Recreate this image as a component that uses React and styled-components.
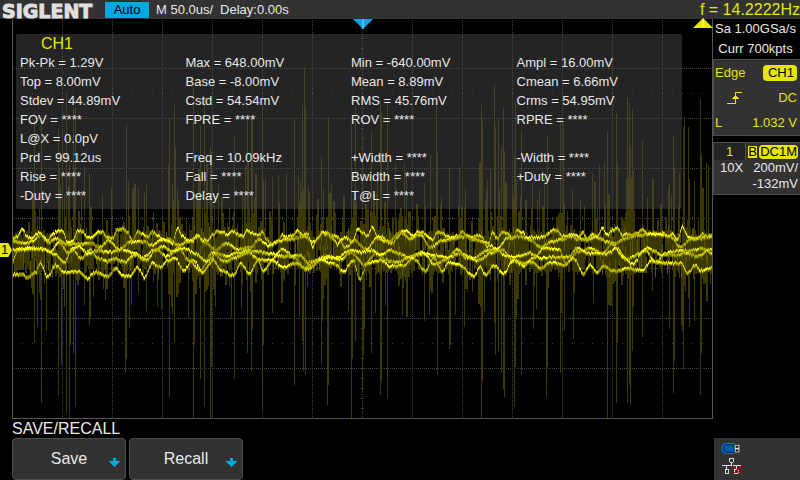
import React from "react";
import styled, { createGlobalStyle } from "styled-components";

const measures = [
  ["Pk-Pk = 1.29V", "Max = 648.00mV", "Min = -640.00mV", "Ampl = 16.00mV"],
  ["Top = 8.00mV", "Base = -8.00mV", "Mean = 8.89mV", "Cmean = 6.66mV"],
  ["Stdev = 44.89mV", "Cstd = 54.54mV", "RMS = 45.76mV", "Crms = 54.95mV"],
  ["FOV = ****", "FPRE = ****", "ROV = ****", "RPRE = ****"],
  ["L@X = 0.0pV", "", "", ""],
  ["Prd = 99.12us", "Freq = 10.09kHz", "+Width = ****", "-Width = ****"],
  ["Rise = ****", "Fall = ****", "Bwidth = ****", "+Duty = ****"],
  ["-Duty = ****", "Delay = ****", "T@L = ****", ""],
];

// x, y pairs: how far the noise peaks reach above the trace
const peaksUp = [
  34, 113, 41, 117, 58, 129, 59, 168, 62, 133, 66, 93, 69, 157, 73, 109, 75, 108, 84, 167, 89, 173, 111, 187,
  126, 125, 128, 181, 138, 187, 144, 193, 146, 185, 169, 119, 174, 105, 175, 147, 193, 87, 194, 193, 200, 125,
  204, 97, 210, 147, 211, 152, 218, 185, 234, 135, 245, 165, 247, 118, 251, 119, 252, 115, 262, 105, 263, 181,
  265, 179, 272, 177, 278, 175, 286, 173, 294, 117, 298, 175, 302, 105, 304, 67, 305, 107, 308, 187, 321, 157,
  328, 117, 331, 183, 351, 125, 355, 105, 362, 136, 371, 131, 380, 101, 381, 113, 387, 101, 395, 163, 406, 173,
  424, 183, 430, 155, 436, 97, 437, 153, 449, 167, 459, 167, 465, 189, 481, 105, 482, 121, 486, 189, 490, 167,
  494, 85, 495, 127, 498, 117, 501, 147, 503, 107, 504, 151, 514, 155, 515, 101, 521, 131, 532, 183, 539, 189,
  544, 177, 547, 135, 560, 120, 563, 123, 572, 189, 592, 173, 599, 165, 604, 163, 607, 131, 616, 113, 617, 163,
  627, 97, 629, 103, 630, 147, 632, 109, 633, 171, 642, 141, 652, 179, 653, 179, 669, 183, 673, 135, 674, 167,
  679, 173, 683, 127, 684, 117, 688, 127, 689, 179, 694, 181, 700, 99, 701, 155, 706, 163, 708, 165,
];

const peaksDown = [
  34, 343, 37, 327, 41, 403, 46, 331, 58, 395, 61, 365, 66, 413, 69, 418, 70, 345, 73, 353, 75, 407, 84, 305,
  89, 325, 90, 317, 125, 373, 126, 359, 129, 327, 138, 293, 146, 311, 157, 307, 161, 309, 169, 397, 171, 307,
  174, 343, 188, 319, 193, 418, 194, 345, 200, 379, 204, 407, 210, 418, 211, 367, 231, 318, 234, 379, 241, 309,
  247, 353, 251, 371, 252, 329, 262, 413, 263, 345, 272, 313, 294, 385, 299, 317, 302, 341, 303, 371, 305, 375,
  321, 365, 322, 321, 327, 405, 328, 385, 348, 311, 351, 418, 352, 359, 355, 341, 362, 393, 363, 355, 364, 329,
  371, 353, 375, 313, 380, 395, 381, 381, 387, 399, 402, 315, 406, 317, 407, 317, 424, 321, 429, 315, 437, 375,
  449, 349, 450, 345, 455, 315, 464, 327, 481, 418, 482, 381, 484, 313, 494, 323, 495, 355, 498, 351, 501, 373,
  503, 389, 504, 397, 514, 407, 515, 367, 516, 317, 521, 375, 533, 329, 536, 309, 546, 397, 547, 367, 560, 373,
  561, 313, 564, 331, 573, 339, 593, 303, 607, 418, 608, 303, 616, 403, 617, 343, 627, 403, 629, 385, 630, 405,
  632, 351, 633, 307, 642, 337, 652, 291, 669, 329, 673, 393, 674, 361, 681, 325, 682, 331, 683, 369, 689, 327,
  694, 321, 700, 395, 701, 353, 706, 301,
];

const topTrace = [
  238, 236, 229, 237, 238, 233, 235, 241, 234, 231, 231, 242, 241, 231, 231, 238, 237, 232, 232, 237, 238, 230,
  228, 232, 241, 232, 233, 237, 232, 235, 239, 240, 243, 228, 236, 240, 241, 235, 240, 240, 235, 231, 232, 235,
  231, 234, 236, 230, 233, 235, 232, 240, 244, 241, 235, 237, 235, 231, 235, 233, 246, 238, 232, 233, 238, 244,
  238, 238, 241, 229, 232, 236, 227, 237, 237, 242, 243, 236, 231, 231, 236, 232, 232, 236, 240, 232, 233, 237,
  238, 236, 231, 236, 237, 235, 238, 247, 232, 238, 232, 233, 238, 230, 232, 238, 237, 237, 237, 234, 230, 230,
  236, 236, 236, 239, 232, 238, 234, 236, 228, 235, 230, 228, 235, 234, 235, 233, 230, 234, 233, 234, 233, 236,
  234, 239, 226, 236, 238, 238, 234, 237, 236,
].flatMap((y, i) => [12 + i * 5, y]);

const upperTrace = [
  12, 240, 24, 243, 32, 241, 40, 235, 48, 242, 56, 238, 65, 243, 76, 244, 90, 243, 100, 247, 108, 240, 118, 249,
  130, 242, 142, 241, 152, 245, 160, 240, 168, 239, 178, 245, 188, 241, 198, 236, 206, 243, 215, 250, 226, 243,
  238, 249, 250, 247, 258, 239, 268, 245, 280, 240, 294, 238, 304, 236, 313, 242, 322, 233, 336, 236, 345, 247,
  354, 240, 366, 249, 376, 238, 388, 241, 400, 232, 410, 238, 420, 234, 430, 247, 442, 240, 452, 238, 464, 236,
  474, 239, 485, 242, 496, 249, 508, 237, 520, 236, 530, 239, 540, 247, 552, 241, 562, 239, 572, 234, 584, 240,
  596, 237, 606, 241, 614, 243, 624, 238, 636, 235, 648, 234, 660, 234, 670, 236, 680, 247, 690, 239, 700, 238, 711, 236,
];

const midTrace = [
  12, 250, 20, 249, 38, 248, 50, 251, 58, 242, 68, 252, 78, 246, 88, 254, 97, 250, 110, 252, 120, 249, 132, 252,
  142, 257, 154, 250, 162, 246, 172, 251, 184, 248, 196, 254, 206, 261, 216, 253, 226, 256, 238, 252, 250, 250,
  260, 252, 270, 253, 283, 256, 300, 255, 307, 262, 323, 258, 337, 257, 350, 250, 363, 252, 370, 250, 380, 255,
  390, 250, 400, 254, 410, 257, 420, 253, 433, 255, 447, 257, 460, 253, 473, 258, 487, 250, 497, 248, 503, 255,
  513, 257, 530, 253, 540, 258, 553, 257, 567, 257, 577, 248, 587, 253, 607, 253, 617, 248, 625, 259, 640, 253,
  647, 248, 653, 250, 662, 255, 670, 252, 680, 250, 693, 250, 703, 248, 711, 253,
];

const lowMidTrace = [
  12, 260, 18, 249, 30, 248, 44, 249, 54, 254, 64, 262, 72, 248, 80, 258, 90, 250, 98, 258, 106, 261, 114, 258,
  124, 262, 134, 254, 146, 260, 156, 249, 166, 256, 178, 248, 188, 260, 200, 270, 212, 252, 224, 261, 236, 257,
  248, 252, 258, 259, 270, 260, 282, 249, 294, 257, 304, 268, 316, 260, 326, 256, 340, 259, 350, 252, 364, 264,
  376, 252, 386, 260, 398, 262, 408, 257, 422, 252, 434, 264, 446, 259, 456, 249, 466, 257, 478, 260, 490, 253,
  502, 249, 512, 260, 524, 263, 534, 257, 544, 248, 558, 249, 566, 263, 578, 251, 590, 248, 602, 253, 612, 243,
  622, 256, 632, 264, 644, 250, 656, 262, 664, 253, 676, 255, 686, 252, 696, 256, 711, 249,
];

const lowTrace = [
  12, 274, 20, 274, 28, 277, 35, 272, 40, 263, 47, 277, 55, 265, 63, 272, 78, 271, 87, 278, 95, 272, 107, 276,
  115, 268, 123, 276, 130, 275, 137, 267, 144, 277, 152, 263, 160, 267, 167, 260, 175, 258, 183, 270, 193, 260,
  202, 272, 213, 260, 220, 270, 233, 275, 240, 263, 249, 273, 257, 260, 263, 271, 272, 260, 283, 267, 295, 263,
  307, 269, 320, 260, 333, 263, 343, 271, 353, 260, 359, 279, 367, 263, 380, 260, 390, 266, 403, 265, 413, 258,
  425, 271, 433, 257, 442, 271, 448, 262, 460, 265, 473, 276, 480, 267, 485, 275, 493, 265, 503, 273, 513, 260,
  523, 265, 530, 261, 540, 268, 550, 262, 563, 265, 573, 258, 583, 273, 590, 265, 597, 272, 603, 265, 613, 271,
  627, 268, 642, 270, 650, 261, 667, 263, 680, 263, 687, 272, 695, 265, 700, 270, 711, 268,
];

// small seeded generator, so the noise is the same on each render
const makeRandom = (seed) => () => {
  seed = (seed * 16807) % 2147483647;
  return seed / 2147483647;
};

const valueAt = (points, x) => {
  for (let i = 2; i < points.length; i += 2) {
    if (points[i] >= x) {
      const t = (x - points[i - 2]) / (points[i] - points[i - 2] || 1);
      const s = t * t * (3 - 2 * t);
      return points[i - 1] + (points[i + 1] - points[i - 1]) * s;
    }
  }
  return points[points.length - 1];
};

const bar = (x, y1, y2, w = 1) => `M${x} ${Math.round(y1)}h${w}V${Math.round(y2)}h-${w}z`;

const buildWave = () => {
  const random = makeRandom(4211);
  const levels = { noise: "", haze: "", dim: "", mid: "", bright: "", peak: "" };
  const busy = [38, 63, 71, 128, 173, 198, 209, 250, 303, 325, 353, 364, 382, 404, 436, 484, 502, 515, 561, 608, 628, 684, 706];
  for (let i = 0; i < peaksUp.length; i += 2) {
    levels.noise += bar(peaksUp[i], peaksUp[i + 1], 252);
  }
  for (let i = 0; i < peaksDown.length; i += 2) {
    levels.noise += bar(peaksDown[i], 248, peaksDown[i + 1]);
  }
  for (let x = 13; x < 711; x++) {
    const near = busy.some((b) => Math.abs(b - x) < 7);
    const chance = near ? 0.7 : 0.28;
    const width = random() < 0.5 ? 2 : 1;
    if (random() < chance) {
      levels.noise += bar(x, 232 - random() * random() * (near ? 76 : 56), 250, width);
    }
    if (random() < chance) {
      levels.noise += bar(x, 250, 266 + random() * random() * (near ? 54 : 40), width);
    }
    if (random() < 0.5) {
      levels.noise += bar(x, 231 + random() * 8, 260 + random() * 14, 2);
    }
    if (random() < (near ? 0.6 : 0.25)) {
      const y = 226 + random() * 38;
      levels.haze += bar(x, y, y + 4 + random() * 14);
    }
  }
  [topTrace, upperTrace, midTrace, lowMidTrace, lowTrace].forEach((trace, n) => {
    const faint = n === 1 || n === 3 ? 0.15 : 0;
    // glow drifts slowly along the trace, so it lights up in runs
    let glow = 0.5;
    let target = 0.5;
    for (let x = 13; x < 712; x++) {
      if (random() < 0.25) target = random();
      glow += (target - glow) * 0.4;
      const y = Math.round(valueAt(trace, x) + random() * 1.6 - 0.8);
      const slope = Math.abs(valueAt(trace, x + 1) - valueAt(trace, x - 1)) / 2;
      const r = glow + random() * 0.4 - faint - slope * 0.1;
      levels.haze += bar(x, y - 2, y + 3);
      levels.dim += bar(x, y - 1, y + 2);
      if (r > 0.2) levels.mid += bar(x, y - 1, y + 1 + (random() < 0.4 ? 1 : 0));
      if (r > 0.55) levels.bright += bar(x, y - 1, y + 1);
      if (r > 0.85) levels.peak += bar(x, y - 1, y + 1);
    }
  });
  return levels;
};

const wave = buildWave();

const range = (from, to, step) => {
  const list = [];
  for (let v = from; v < to; v += step) list.push(v);
  return list;
};

const Waveform = () => (
  <Scope viewBox="12 19 701 400" preserveAspectRatio="none" shapeRendering="crispEdges" aria-hidden="true">
    <g stroke="#444" strokeWidth="1" strokeDasharray="1 1">
      {range(62, 712, 50).map((x) => (
        <path key={x} d={`M${x}.5 20V418`} />
      ))}
      {range(68, 418, 50).map((y) => (
        <path key={y} d={`M14 ${y}.5H712`} />
      ))}
    </g>
    <g stroke="#444" strokeWidth="1">
      <path d="M22 93.5H712M22 343.5H712" strokeDasharray="1 9" />
      <path d="M22 218.5H712" strokeWidth="3" strokeDasharray="1 9" />
      <path d="M362.5 28V418" strokeWidth="3" strokeDasharray="1 9" />
    </g>
    <path d={wave.noise} fill="#3c3900" />
    <path d={wave.haze} fill="#5a5700" />
    <path d={wave.dim} fill="#8a8800" />
    <path d={wave.mid} fill="#b6b400" />
    <path d={wave.bright} fill="#dedc00" />
    <path d={wave.peak} fill="#ffff10" />
    <path d="M12.5 19V418.5H712.5V19" fill="none" stroke="#565656" />
  </Scope>
);

const DownArrow = () => (
  <ArrowIcon width="11" height="9" viewBox="0 0 11 9" shapeRendering="crispEdges" aria-hidden="true">
    <path d="M4 0h3v3h4v1h-1v1H9v1H8v1H7v1H6v1H5V8H4V7H3V6H2V5H1V4H0V3h4z" fill="#00a8e4" />
  </ArrowIcon>
);

const App = () => {
  return (
    <Page>
      <GlobalStyle />
      <Header>
        <Logo>SIGLENT</Logo>
        <Mode>Auto</Mode>
        <span>M 50.0us/</span>
        <span>Delay:0.00s</span>
        <Frequency>f = 14.2222Hz</Frequency>
      </Header>

      <Body>
        <Plot>
          <Waveform />
          <DelayMarker width="20" height="10" viewBox="0 0 20 10">
            <path d="M0 0h20L10 10z" fill="#00a8e4" />
            <path d="M10 0v10" stroke="#7fdcff" />
          </DelayMarker>
          <TriggerMarker width="20" height="10" viewBox="0 0 20 10">
            <path d="M10 0l10 10H0z" fill="#e6e600" />
            <path d="M10 1v9" stroke="#ffff70" />
          </TriggerMarker>
          <ChannelMarker>1</ChannelMarker>
          <Measurements>
            <PanelTitle>CH1</PanelTitle>
            <Table>
              <tbody>
                {measures.map((row, i) => (
                  <tr key={i}>
                    {row.map((text, j) => (
                      <td key={j}>{text}</td>
                    ))}
                  </tr>
                ))}
              </tbody>
            </Table>
          </Measurements>
        </Plot>

        <Side>
          <Sampling>
            <div>Sa 1.00GSa/s</div>
            <div>Curr 700kpts</div>
          </Sampling>
          <TriggerCard>
            <Line>
              <span>Edge</span>
              <Tag>CH1</Tag>
            </Line>
            <Line>
              <EdgeIcon width="16" height="14" viewBox="0 0 16 14" shapeRendering="crispEdges" aria-hidden="true">
                <path d="M0 12.5h8.5V1.5H15" fill="none" stroke="#e6e600" />
                <path d="M8 4h1v1h1v1h1v1h1v1H5V7h1V6h1V5h1z" fill="#e6e600" />
              </EdgeIcon>
              <span>DC</span>
            </Line>
            <Line>
              <span>L</span>
              <span>1.032 V</span>
            </Line>
          </TriggerCard>
          <ChannelCard>
            <ChannelHead>
              <ChannelNumber>1</ChannelNumber>
              <Bandwidth>B</Bandwidth>
              <Coupling>DC1M</Coupling>
            </ChannelHead>
            <ChannelLine>
              <span>10X</span>
              <span>200mV/</span>
            </ChannelLine>
            <ChannelLine>
              <span />
              <span>-132mV</span>
            </ChannelLine>
          </ChannelCard>
        </Side>
      </Body>

      <Footer>
        <Menu>
          <MenuTitle>SAVE/RECALL</MenuTitle>
          <MenuButtons>
            <MenuButton type="button">
              Save
              <DownArrow />
            </MenuButton>
            <MenuButton type="button">
              Recall
              <DownArrow />
            </MenuButton>
          </MenuButtons>
        </Menu>
        <Status>
          <svg width="20" height="12" viewBox="0 0 20 12" aria-hidden="true">
            <path d="M14 .5H4L.5 3v6L4 11.5h10" fill="#0060a8" stroke="#0878f0" />
            <path d="M13.5 2H4L2.5 3.5v5L4 10h9.5z" fill="#0060a8" stroke="#001c50" />
            <path d="M14 2h5v8h-5z" fill="#ddd" />
            <path d="M15 3h3v2h-3zM15 7h3v2h-3z" fill="#111" />
          </svg>
          <svg width="22" height="18" viewBox="0 0 22 18" shapeRendering="crispEdges" aria-hidden="true">
            <g fill="none" stroke="#e4e4e4">
              <path d="M8.5 .5h4v4h-4zM3.5 12.5h4v4h-4zM13.5 12.5h4v4h-4z" />
              <path d="M0 8.5h21M10.5 4.5v4M5.5 8.5v4M15.5 8.5v4" />
            </g>
            <path d="M11 8l10 10M21 8L11 18" stroke="#d01010" />
          </svg>
        </Status>
      </Footer>
    </Page>
  );
};

export default App;

const GlobalStyle = createGlobalStyle`
  * {
    box-sizing: border-box;
  }
  body {
    margin: 0;
    background: #000;
    color: #e8e8e8;
    font-family: "Liberation Sans", Arial, sans-serif;
    font-size: 13px;
  }
`;

const Page = styled.div`
  display: flex;
  flex-direction: column;
  min-height: 100vh;
`;

const Header = styled.header`
  display: flex;
  align-items: center;
  gap: 7px;
  height: 19px;
  background: #323232;
  white-space: nowrap;
`;

const Logo = styled.div`
  align-self: flex-start;
  width: 98px;
  padding-left: 2px;
  color: #e0e0e0;
  font-family: "DejaVu Sans", sans-serif;
  font-size: 19px;
  font-weight: bold;
  line-height: 22px;
  -webkit-text-stroke: 1px #e0e0e0;
`;

const Mode = styled.div`
  width: 44px;
  line-height: 16px;
  background: #00a8e0;
  color: #000;
  text-align: center;
`;

const Frequency = styled.div`
  margin-left: auto;
  color: #e6e600;
  font-size: 16px;
`;

const Body = styled.main`
  display: flex;
  flex: 1;
`;

const Plot = styled.section`
  position: relative;
  flex: 1;
  margin-left: 12px;
  padding: 15px 31px 15px 4px;
`;

const Scope = styled.svg`
  position: absolute;
  top: 0;
  left: 0;
  width: 100%;
  height: 100%;
`;

const DelayMarker = styled.svg`
  position: absolute;
  top: 0;
  left: 50%;
  transform: translateX(-50%);
`;

const TriggerMarker = styled.svg`
  position: absolute;
  top: -1px;
  right: 0;
`;

const ChannelMarker = styled.div`
  position: absolute;
  top: 56%;
  left: -12px;
  width: 12px;
  padding-left: 1px;
  line-height: 14px;
  background: #e6e600;
  clip-path: polygon(0 0, 70% 0, 100% 50%, 70% 100%, 0 100%);
  color: #000;
`;

const Measurements = styled.div`
  position: relative;
  background: rgba(80, 80, 80, 0.45);
  border-radius: 2px;
  line-height: 19px;
  padding: 0 0 4px 4px;
`;

const PanelTitle = styled.h2`
  margin: 0;
  padding-left: 21px;
  color: #e6e600;
  font-size: 16px;
  font-weight: normal;
`;

const Table = styled.table`
  width: 100%;
  table-layout: fixed;
  border-collapse: collapse;

  td {
    height: 19px;
    padding: 0;
    white-space: nowrap;
  }
`;

const Side = styled.aside`
  width: 87px;
  white-space: nowrap;
`;

const Sampling = styled.div`
  padding: 0 4px 0 2px;
  line-height: 20px;
  text-align: center;
`;

const Card = styled.div`
  background: #323232;
  border: 1px solid #4c4c4c;
  border-right: 0;
`;

const TriggerCard = styled(Card)`
  margin-bottom: 6px;
  color: #e6e600;
`;

const Line = styled.div`
  display: flex;
  align-items: center;
  justify-content: space-between;
  height: 25px;
  padding: 0 3px 0 1px;
`;

const Tag = styled.span`
  padding: 0 3px 0 5px;
  border-radius: 4px;
  background: #e6e600;
  color: #000;
  line-height: 16px;
`;

const EdgeIcon = styled.svg`
  margin-left: 12px;
`;

const ChannelCard = styled(Card)`
  padding-bottom: 2px;
`;

const ChannelHead = styled.div`
  display: flex;
  align-items: center;
  gap: 2px;
  padding-right: 2px;
  color: #000;
`;

const ChannelNumber = styled.span`
  flex: 1;
  background: #242424;
  border-right: 1px solid #4c4c4c;
  color: #e6e600;
  line-height: 17px;
  text-align: center;
`;

const Bandwidth = styled.span`
  width: 9px;
  background: #e6e600;
  font-size: 13px;
  line-height: 12px;
  text-align: center;
`;

const Coupling = styled.span`
  padding: 0 1px;
  border-radius: 4px;
  background: #e6e600;
  line-height: 14px;
`;

const ChannelLine = styled.div`
  display: flex;
  justify-content: space-between;
  padding: 0 2px 0 6px;
  line-height: 16px;
`;

const Footer = styled.footer`
  display: flex;
  justify-content: space-between;
  align-items: flex-end;
  padding-left: 12px;
`;

const Menu = styled.nav`
  flex: 1;
`;

const MenuTitle = styled.h1`
  margin: 0;
  font-size: 16px;
  font-weight: normal;
  line-height: 19px;
`;

const MenuButtons = styled.div`
  display: flex;
  gap: 3px;
`;

const MenuButton = styled.button`
  position: relative;
  width: 114px;
  height: 42px;
  border: 1px solid #4c4c4c;
  border-radius: 4px;
  background: #323232;
  color: #e8e8e8;
  font: inherit;
  font-size: 16px;
  cursor: pointer;
`;

const ArrowIcon = styled.svg`
  position: absolute;
  right: 5px;
  bottom: 12px;
`;

const Status = styled.div`
  display: flex;
  flex-direction: column;
  gap: 4px;
  width: 86px;
  height: 42px;
  padding: 5px 7px;
  background: #323232;
`;
